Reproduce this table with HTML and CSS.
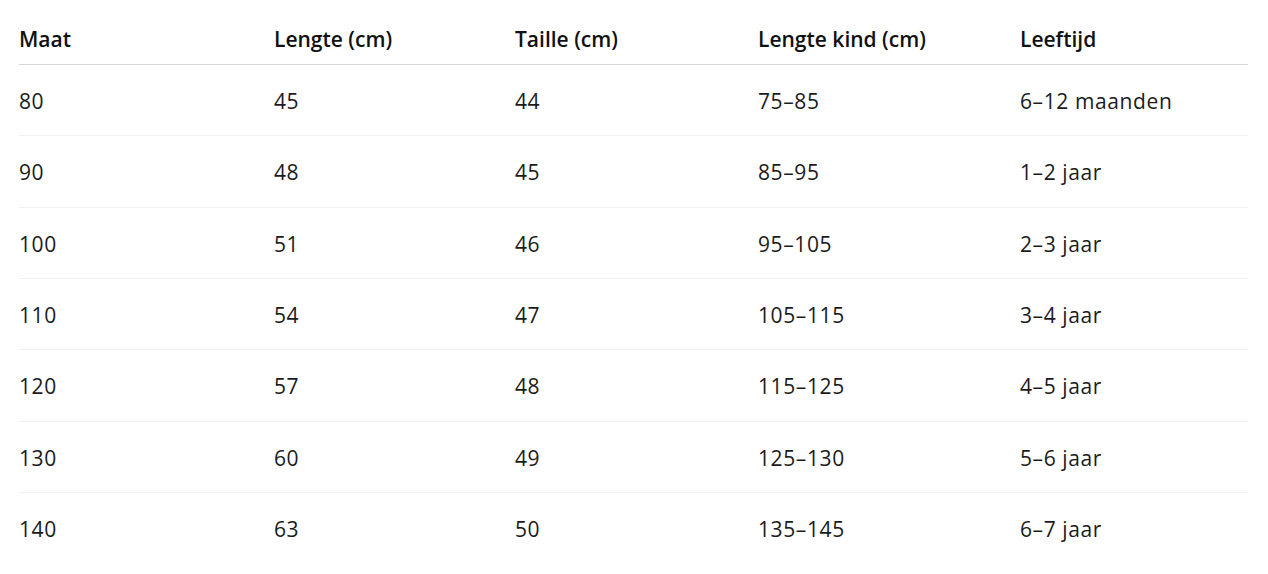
FILE: index.html
```html
<!DOCTYPE html>
<html lang="nl">
<head>
<meta charset="utf-8">
<title>Maattabel</title>
<link rel="stylesheet" href="styles.css">
</head>
<body>
<div class="wrap">
<table class="size-table">
  <colgroup>
    <col class="c1"><col class="c2"><col class="c3"><col class="c4"><col class="c5">
  </colgroup>
  <thead>
    <tr><th>Maat</th><th>Lengte (cm)</th><th>Taille (cm)</th><th>Lengte kind (cm)</th><th>Leeftijd</th></tr>
  </thead>
  <tbody>
    <tr><td>80</td><td>45</td><td>44</td><td>75–85</td><td>6–12 maanden</td></tr>
    <tr><td>90</td><td>48</td><td>45</td><td>85–95</td><td>1–2 jaar</td></tr>
    <tr><td>100</td><td>51</td><td>46</td><td>95–105</td><td>2–3 jaar</td></tr>
    <tr><td>110</td><td>54</td><td>47</td><td>105–115</td><td>3–4 jaar</td></tr>
    <tr><td>120</td><td>57</td><td>48</td><td>115–125</td><td>4–5 jaar</td></tr>
    <tr><td>130</td><td>60</td><td>49</td><td>125–130</td><td>5–6 jaar</td></tr>
    <tr><td>140</td><td>63</td><td>50</td><td>135–145</td><td>6–7 jaar</td></tr>
  </tbody>
</table>
</div>
</body>
</html>
```
FILE: styles.css
```css
html, body {
  margin: 0;
  padding: 0;
  background: #ffffff;
}
body {
  font-family: "Open Sans", "Noto Sans", sans-serif;
  color: #1b1b1b;
}
.wrap {
  padding: 0 20px 0 19px;
}
.size-table {
  width: 100%;
  border-collapse: collapse;
  table-layout: fixed;
  font-size: 21px;
  line-height: 28px;
}
.c1 { width: 255px; }
.c2 { width: 241px; }
.c3 { width: 243px; }
.c4 { width: 262px; }
.c5 { width: auto; }
.size-table th {
  text-align: left;
  font-weight: 600;
  color: #111111;
  padding: 25px 0 11px 0;
  border-bottom: 1px solid #d6d6d6;
}
.size-table td {
  padding: 22px 0 20.33px 0;
  border-bottom: 1px solid #f0f0f0;
  font-weight: 400;
  letter-spacing: 0.6px;
}
.size-table tbody tr:last-child td {
  border-bottom: none;
}
```
